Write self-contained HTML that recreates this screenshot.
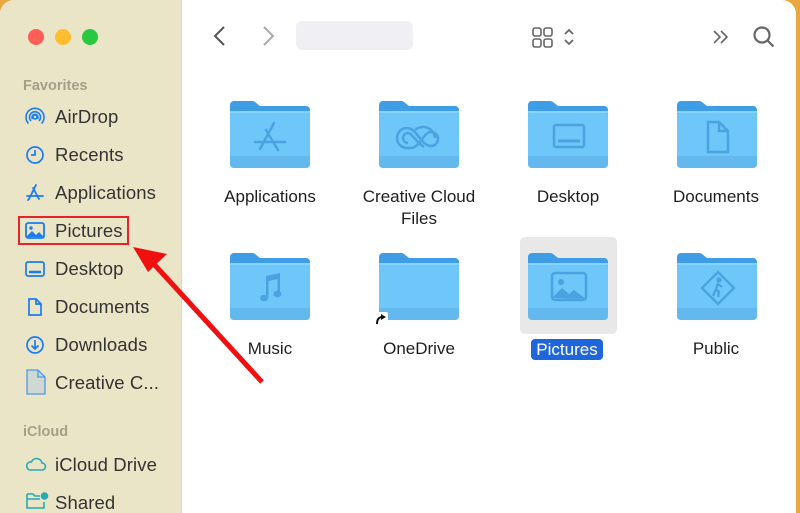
<!DOCTYPE html>
<html><head><meta charset="utf-8"><style>
*{margin:0;padding:0;box-sizing:border-box}
body{width:800px;height:513px;overflow:hidden;background:#e9a83e;font-family:"Liberation Sans",sans-serif;position:relative}
#win{position:absolute;left:0;top:0;width:796px;height:513px;background:#fff;border-radius:14px 14px 0 0;overflow:hidden}
#side{position:absolute;left:0;top:0;width:182px;height:513px;background:#ebe5c8;border-right:1px solid #ddd6b8}
.dot{position:absolute;top:29px;width:16px;height:16px;border-radius:50%}
.hd{position:absolute;left:23px;font-size:14.5px;color:#a59f88;font-weight:bold}
.it{position:absolute;left:55px;font-size:18.5px;color:#333330;letter-spacing:0.1px}
.ic{position:absolute;left:25px}
.lbl{position:absolute;font-size:17px;color:#1e1e1e;text-align:center;width:150px;line-height:22px}
.f{position:absolute}
</style></head><body>
<div id="win">
<div id="side">
<div class="dot" style="left:28px;background:#fd5f57"></div>
<div class="dot" style="left:55px;background:#febc2e"></div>
<div class="dot" style="left:82px;background:#28c840"></div>
<div class="hd" style="top:78px">Favorites</div>
<svg class="ic" style="top:107px" width="20" height="20" viewBox="0 0 20 20" fill="none" stroke="#1a7cf0" stroke-width="1.6"><circle cx="10" cy="10" r="2"/><path d="M6 14a5.5 5.5 0 1 1 8 0M3.5 16.5a9 9 0 1 1 13 0"/><path d="M7.5 12a3 3 0 1 1 5 0"/></svg>
<div class="it" style="top:106px">AirDrop</div>
<svg class="ic" style="top:145px" width="20" height="20" viewBox="0 0 20 20" fill="none" stroke="#1a7cf0" stroke-width="1.7"><circle cx="10" cy="10" r="8"/><path d="M10 5v5H6"/></svg>
<div class="it" style="top:144px">Recents</div>
<svg class="ic" style="top:183px" width="20" height="20" viewBox="0 0 20 20" fill="none" stroke="#1a7cf0" stroke-width="1.8" stroke-linecap="round"><path d="M11 2L4 16M8 5l6 11M2 13h16M3 17l1-1"/></svg>
<div class="it" style="top:182px">Applications</div>
<svg class="ic" style="top:222px" width="20" height="18" viewBox="0 0 20 18"><rect x="1" y="1" width="18" height="15" rx="2" fill="none" stroke="#1a7cf0" stroke-width="1.8"/><path d="M1 15l6-6 4 4 3-3 5 5z" fill="#1a7cf0"/><circle cx="6" cy="6" r="1.7" fill="#1a7cf0"/></svg>
<div class="it" style="top:220px">Pictures</div>
<svg class="ic" style="top:260px" width="20" height="18" viewBox="0 0 20 18" fill="none" stroke="#1a7cf0" stroke-width="1.7"><rect x="1" y="2" width="18" height="14" rx="2"/><path d="M4 12h12" stroke-width="2.5"/></svg>
<div class="it" style="top:258px">Desktop</div>
<svg class="ic" style="top:297px" width="20" height="20" viewBox="0 0 20 20" fill="none" stroke="#1a7cf0" stroke-width="1.7"><path d="M4 2h7l5 5v11H4zM11 2v5h5"/></svg>
<div class="it" style="top:296px">Documents</div>
<svg class="ic" style="top:335px" width="20" height="20" viewBox="0 0 20 20" fill="none" stroke="#1a7cf0" stroke-width="1.7"><circle cx="10" cy="10" r="8"/><path d="M10 5v9M6.5 10.5L10 14l3.5-3.5"/></svg>
<div class="it" style="top:334px">Downloads</div>
<svg class="ic" style="top:369px" width="22" height="26" viewBox="0 0 22 26"><path d="M2 1h11l7 7v17H2z" fill="#cfd8d2" stroke="#4a9ae8" stroke-width="1.3"/><path d="M13 1v7h7" fill="none" stroke="#4a9ae8" stroke-width="1.3"/></svg>
<div class="it" style="top:372px">Creative C...</div>
<div class="hd" style="top:424px">iCloud</div>
<svg class="ic" style="top:455px" width="22" height="18" viewBox="0 0 22 18" fill="none" stroke="#27aab0" stroke-width="1.6"><path d="M5 15h12a3.5 3.5 0 0 0 0-7 5.5 5.5 0 0 0-10.5-1A4 4 0 0 0 5 15z"/></svg>
<div class="it" style="top:454px">iCloud Drive</div>
<svg class="ic" style="top:491px" width="24" height="20" viewBox="0 0 24 20" fill="none" stroke="#27aab0" stroke-width="1.6"><path d="M2 3h6l2 2h5M2 3v14h17v-6M2 8h13"/><circle cx="19.5" cy="5" r="3" fill="#27aab0"/></svg>
<div class="it" style="top:492px">Shared</div>
</div>

<svg style="position:absolute;left:212px;top:25px" width="16" height="22" viewBox="0 0 16 22" fill="none" stroke="#555" stroke-width="2"><path d="M12 2L3 11l9 9"/></svg>
<svg style="position:absolute;left:260px;top:25px" width="16" height="22" viewBox="0 0 16 22" fill="none" stroke="#aaa" stroke-width="2"><path d="M4 2l9 9-9 9"/></svg>
<div style="position:absolute;left:296px;top:21px;width:117px;height:29px;background:#f0f0f4;border-radius:6px"></div>
<svg style="position:absolute;left:532px;top:27px" width="22" height="22" viewBox="0 0 22 22" fill="none" stroke="#666" stroke-width="1.6"><rect x="1" y="1" width="8" height="8" rx="2"/><rect x="12" y="1" width="8" height="8" rx="2"/><rect x="1" y="12" width="8" height="8" rx="2"/><rect x="12" y="12" width="8" height="8" rx="2"/></svg>
<svg style="position:absolute;left:563px;top:27px" width="12" height="20" viewBox="0 0 12 20" fill="none" stroke="#666" stroke-width="1.8"><path d="M2 7l4-4 4 4M2 13l4 4 4-4"/></svg>
<svg style="position:absolute;left:712px;top:29px" width="20" height="16" viewBox="0 0 20 16" fill="none" stroke="#666" stroke-width="1.6"><path d="M2 2l6 6-6 6M9 2l6 6-6 6"/></svg>
<svg style="position:absolute;left:752px;top:25px" width="24" height="24" viewBox="0 0 24 24" fill="none" stroke="#666" stroke-width="2.2"><circle cx="10" cy="10" r="7.5"/><path d="M15.5 15.5l6 6"/></svg>

<div style="position:absolute;left:520px;top:237px;width:97px;height:97px;background:#e8e8e8;border-radius:5px"></div>

<svg width="0" height="0" style="position:absolute"><defs>
<g id="fold">
<path d="M0 5a4 4 0 0 1 4-4h18a4 4 0 0 1 3 1l5 4h46a4 4 0 0 1 4 4v12H0z" fill="#3e9de4"/>
<rect x="0" y="11" width="80" height="57" rx="4" fill="#6ec7f8"/>
<rect x="0" y="11" width="80" height="2" fill="#86d3fb"/>
<path d="M0 56h80v8a4 4 0 0 1-4 4H4a4 4 0 0 1-4-4z" fill="#63b9ee"/>
</g></defs></svg>
<svg class="f" style="left:230px;top:100px" width="82" height="70" viewBox="0 0 82 70"><use href="#fold"/><g fill="none" stroke="#4aa3e0" stroke-width="2.5" stroke-linecap="round"><path d="M44 23L30 49M36 30l12 20M25 42h30"/></g></svg>
<svg class="f" style="left:379px;top:100px" width="82" height="70" viewBox="0 0 82 70"><use href="#fold"/><g fill="none" stroke="#4aa3e0" stroke-width="2.5"><path d="M28 48a10 10 0 0 1 0-20c5 0 8 4 12 9s7 9 12 9a7 7 0 0 0 0-14c-6 0-9 9-14 13a9 9 0 0 1-6 3z"/><path d="M29 43a5 5 0 0 1 0-10c4 0 8 9 16 14M36 30a12 12 0 0 1 20 8"/></g></svg>
<svg class="f" style="left:528px;top:100px" width="82" height="70" viewBox="0 0 82 70"><use href="#fold"/><g fill="none" stroke="#4aa3e0" stroke-width="2.5"><rect x="26" y="25" width="30" height="22" rx="2"/><path d="M30 41h22" stroke-width="3"/></g></svg>
<svg class="f" style="left:677px;top:100px" width="82" height="70" viewBox="0 0 82 70"><use href="#fold"/><g fill="none" stroke="#4aa3e0" stroke-width="2.5"><path d="M31 22h11l9 9v21H31zM42 22v9h9"/></g></svg>
<svg class="f" style="left:230px;top:252px" width="82" height="70" viewBox="0 0 82 70"><use href="#fold"/><g fill="#4aa3e0"><path d="M36 24l14-3v20h-2.5V27l-9 2v17H36z"/><ellipse cx="34" cy="46" rx="4" ry="3.3"/><ellipse cx="47.5" cy="42" rx="4" ry="3.3"/></g></svg>
<svg class="f" style="left:379px;top:252px" width="82" height="70" viewBox="0 0 82 70"><use href="#fold"/></svg>
<svg style="position:absolute;left:374px;top:312px" width="14" height="14" viewBox="0 0 14 14"><rect x="0" y="0" width="14" height="14" rx="2" fill="#fff"/><path d="M3 12c0-5 2-7 6-7" fill="none" stroke="#111" stroke-width="2"/><path d="M7 2l5 3-5 3z" fill="#111"/></svg>
<svg class="f" style="left:528px;top:252px" width="82" height="70" viewBox="0 0 82 70"><use href="#fold"/><rect x="24" y="21" width="34" height="27" rx="3" fill="none" stroke="#4aa3e0" stroke-width="2.5"/><path d="M24 46l10-10 7 6 5-4 12 9z" fill="#4aa3e0"/><circle cx="33" cy="30" r="3" fill="#4aa3e0"/></svg>
<svg class="f" style="left:677px;top:252px" width="82" height="70" viewBox="0 0 82 70"><use href="#fold"/><g fill="none" stroke="#4aa3e0" stroke-width="2.3"><path d="M41 20l16 16-16 16-16-16z"/><circle cx="42" cy="28" r="1.5" fill="#4aa3e0"/><path d="M41 31l-2 6 3 3-1 5M39 37l-3 7M41 32l4 3"/></g></svg>

<div class="lbl" style="left:195px;top:186px">Applications</div>
<div class="lbl" style="left:344px;top:186px">Creative Cloud<br>Files</div>
<div class="lbl" style="left:493px;top:186px">Desktop</div>
<div class="lbl" style="left:641px;top:186px">Documents</div>
<div class="lbl" style="left:195px;top:338px">Music</div>
<div class="lbl" style="left:344px;top:338px">OneDrive</div>
<div style="position:absolute;left:531px;top:339px;width:72px;height:21px;background:#1f66dd;border-radius:4px;color:#fff;font-size:17px;text-align:center;line-height:21px">Pictures</div>
<div class="lbl" style="left:641px;top:338px">Public</div>
</div>

<div style="position:absolute;left:18px;top:216px;width:111px;height:29px;border:2px solid #e8222a"></div>
<svg style="position:absolute;left:0;top:0" width="800" height="513"><path d="M262 382L152 262" stroke="#f01010" stroke-width="5"/><path d="M133 247l34 7-19 18z" fill="#f01010"/></svg>
</body></html>
